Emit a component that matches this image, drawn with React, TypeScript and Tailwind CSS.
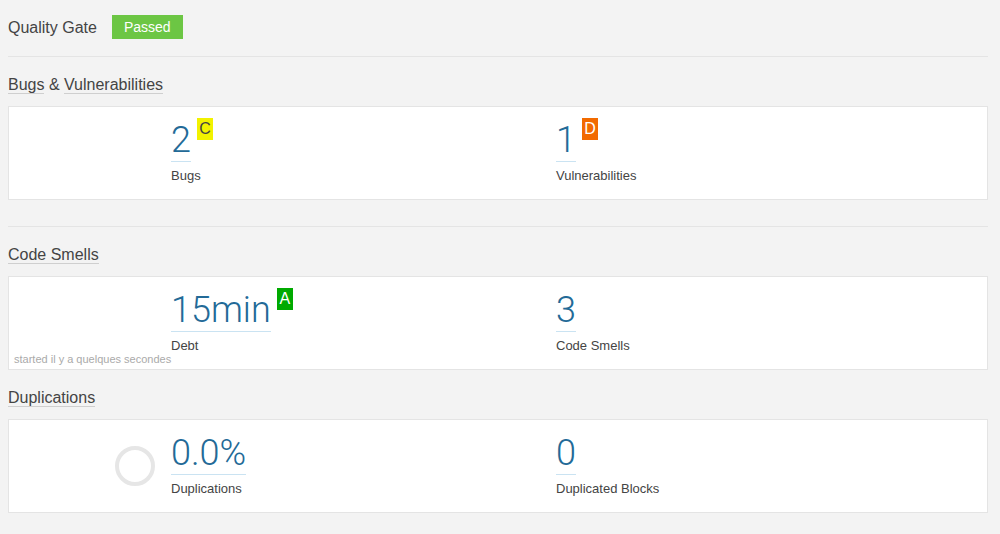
type Metric = {
  value: string;
  label: string;
  rating?: { letter: string; className: string };
};

type Section = {
  title: string[];
  metrics: Metric[];
  donut?: boolean;
  note?: string;
  divider?: boolean;
};

const sections: Section[] = [
  {
    title: ["Bugs", "Vulnerabilities"],
    metrics: [
      { value: "2", label: "Bugs", rating: { letter: "C", className: "bg-[#f2f200] text-[#444]" } },
      { value: "1", label: "Vulnerabilities", rating: { letter: "D", className: "bg-[#f26a00] text-white" } },
    ],
    divider: true,
  },
  {
    title: ["Code Smells"],
    metrics: [
      { value: "15min", label: "Debt", rating: { letter: "A", className: "bg-[#00aa00] text-white" } },
      { value: "3", label: "Code Smells" },
    ],
    note: "started il y a quelques secondes",
  },
  {
    title: ["Duplications"],
    metrics: [
      { value: "0.0%", label: "Duplications" },
      { value: "0", label: "Duplicated Blocks" },
    ],
    donut: true,
  },
];

function Heading({ parts }: { parts: string[] }) {
  return (
    <div className="text-[16px] leading-[20px] text-[#444]">
      {parts.map((p, i) => (
        <span key={p}>
          {i > 0 && " & "}
          <span className="border-b border-[#cfcfcf]">{p}</span>
        </span>
      ))}
    </div>
  );
}

function MetricBlock({ metric }: { metric: Metric }) {
  return (
    <div className="w-[385px]">
      <div className="flex items-start">
        <span className="inline-block border-b border-[#cae3f2] pb-[3px] font-['Roboto'] text-[36px] font-light leading-[36px] text-[#236a97]">
          {metric.value}
        </span>
        {metric.rating && (
          <span
            className={`ml-[6px] -mt-[4px] inline-block h-[22px] w-[16px] text-center text-[16px] leading-[22px] ${metric.rating.className}`}
          >
            {metric.rating.letter}
          </span>
        )}
      </div>
      <div className="mt-[6px] text-[13px] leading-[16px] text-[#444]">{metric.label}</div>
    </div>
  );
}

export default function App() {
  return (
    <div className="min-h-[534px] bg-[#f3f3f3] pl-[8px] pt-[15px] font-['Liberation_Sans',Arial,sans-serif]">
      <div className="w-[980px]">
        <div className="flex h-[24px] items-center">
          <span className="mt-[2px] text-[16px] text-[#444]">Quality Gate</span>
          <span className="ml-[15px] h-[24px] bg-[#6cc644] px-[12px] text-[14px] leading-[24px] text-white">
            Passed
          </span>
        </div>
        <div className="mt-[17px] border-t border-[#e4e4e4]" />

        {sections.map((s) => (
          <div key={s.title.join()}>
            <div className="mt-[18px]">
              <Heading parts={s.title} />
            </div>
            <div className="relative mt-[11px] flex border border-[#e4e4e4] bg-white pb-[15px] pt-[15px]">
              <div className="flex w-[162px] items-center justify-end pr-[16px]">
                {s.donut && (
                  <div className="h-[40px] w-[40px] rounded-full border-[4px] border-[#e6e6e6]" />
                )}
              </div>
              {s.metrics.map((m) => (
                <MetricBlock key={m.label} metric={m} />
              ))}
              {s.note && (
                <div className="absolute bottom-[3px] left-[5px] text-[11px] leading-[13px] text-[#aaa]">
                  {s.note}
                </div>
              )}
            </div>
            {s.divider && <div className="mt-[26px] border-t border-[#e4e4e4]" />}
          </div>
        ))}
      </div>
    </div>
  );
}
